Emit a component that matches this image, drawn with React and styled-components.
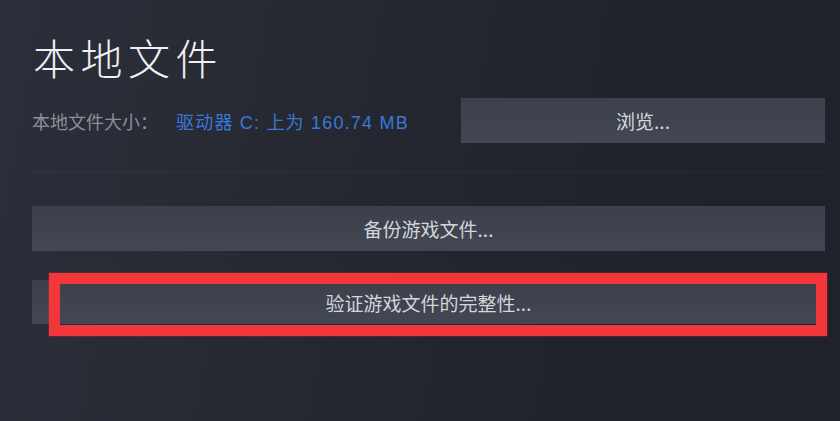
import React from 'react'
import styled, {createGlobalStyle} from 'styled-components'

const GlobalStyle = createGlobalStyle`
    html, body {
        margin: 0;
        padding: 0;
        background: #22252e;
    }
    body {
        font-family: "Noto Sans CJK SC", "Liberation Sans", sans-serif;
    }
`;

const Page = styled.div`
    width: 840px;
    height: 421px;
    box-sizing: border-box;
    padding: 28px 15px 0 32px;
    background: linear-gradient(100deg, #2c2f39 0%, #262932 35%, #20232c 70%, #1f222a 100%);
    overflow: hidden;
`;

const Title = styled.h1`
    margin: 0 0 0 1px;
    height: 58px;
    line-height: 58px;
    font-size: 42px;
    font-weight: 300;
    letter-spacing: 5.5px;
    color: #eef0f2;
`;

const InfoRow = styled.div`
    display: flex;
    align-items: center;
    margin-top: 12px;
    height: 45px;
`;

const Label = styled.span`
    font-size: 18px;
    color: #8b9099;
`;

const Value = styled.span`
    margin-left: 18px;
    font-family: "Liberation Sans", "Noto Sans CJK SC", sans-serif;
    font-size: 18px;
    letter-spacing: 1.2px;
    color: #3a78d8;
`;

const Button = styled.div`
    display: flex;
    align-items: center;
    justify-content: center;
    box-sizing: border-box;
    height: ${p => p.$h || 45}px;
    width: ${p => p.$w ? p.$w + 'px' : 'auto'};
    margin-left: ${p => p.$push ? 'auto' : '0'};
    background: linear-gradient(180deg, #3b404b 0%, #424753 100%);
    color: #d3d6db;
    font-size: 19px;
    cursor: pointer;
`;

const Divider = styled.div`
    margin-top: 28px;
    height: 1px;
    background: rgba(255, 255, 255, 0.035);
`;

const Actions = styled.div`
    display: flex;
    flex-direction: column;
    gap: 29px;
    margin-top: 34px;
`;

const Highlight = styled.div`
    position: relative;
`;

const RedBox = styled.div`
    position: absolute;
    left: 17px;
    top: -7px;
    right: -2px;
    bottom: -12px;
    border: 11px solid #f2363a;
    box-shadow: 0 0 2px rgba(242, 54, 58, 0.6);
    pointer-events: none;
`;

export default function App() {
    return (
        <>
            <GlobalStyle/>
            <Page>
                <Title>本地文件</Title>
                <InfoRow>
                    <Label>本地文件大小：</Label>
                    <Value>驱动器 C: 上为 160.74 MB</Value>
                    <Button $w={364} $push>浏览...</Button>
                </InfoRow>
                <Divider/>
                <Actions>
                    <Button>备份游戏文件...</Button>
                    <Highlight>
                        <Button $h={44}>验证游戏文件的完整性...</Button>
                        <RedBox/>
                    </Highlight>
                </Actions>
            </Page>
        </>
    );
}
